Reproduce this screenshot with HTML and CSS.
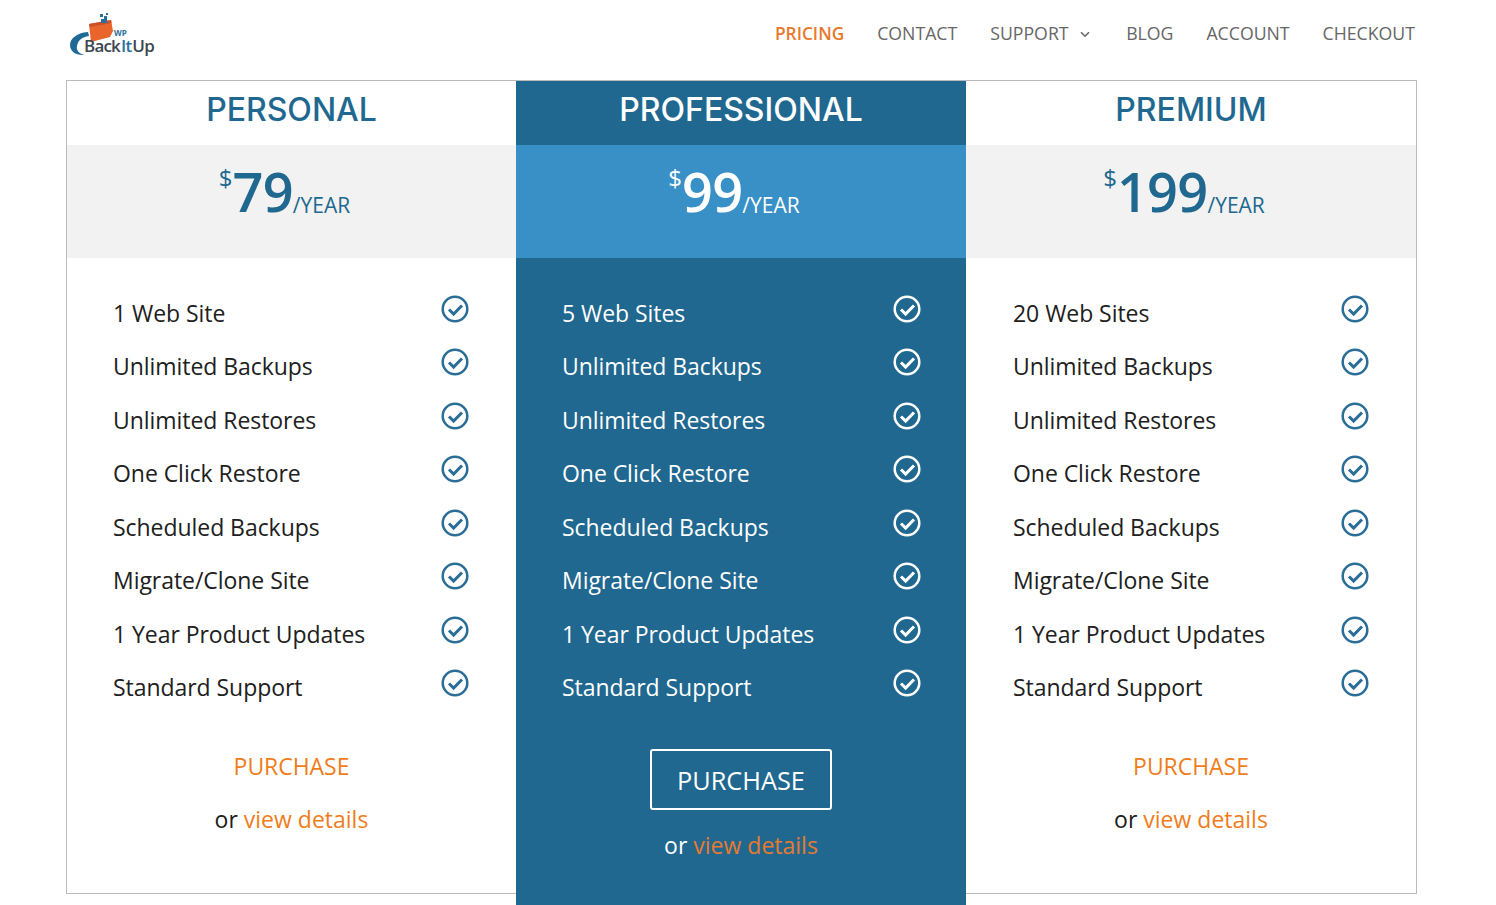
FILE: index.html
```html
<!DOCTYPE html>
<html lang="en">
<head>
<meta charset="utf-8">
<title>Pricing - WP BackItUp</title>
<link rel="stylesheet" href="styles.css">
</head>
<body>
<svg class="defs" width="0" height="0" aria-hidden="true">
  <symbol id="check" viewBox="0 0 28 28">
    <circle cx="14" cy="14" r="12.3" fill="none" stroke="currentColor" stroke-width="2.5"/>
    <path d="M8 14.5l4.6 4.6 8.4-8.6" fill="none" stroke="currentColor" stroke-width="3"/>
  </symbol>
</svg>
<header class="site-header">
  <a class="logo" href="#" aria-label="WP BackItUp">
    <svg class="logo-mark" width="90" height="46" viewBox="0 0 90 46">
      <path d="M19 20C7 21 1 27 1 33c0 6 5 10 13 10h2C10 42 7 38 8 34c1-6 5-9 12-10z" fill="#1f6a95"/>
      <path d="M20 12L42 8l2 11-3 6-19 5z" fill="#e9652c"/>
      <path d="M20 12L42 8l.6 3L21 15z" fill="#c9512a"/>
      <g fill="#2a6f9c"><rect x="31" y="2" width="3" height="3"/><rect x="35" y="4" width="3" height="3"/><rect x="32" y="7" width="6" height="4"/><rect x="37" y="1" width="2" height="2"/></g>
    </svg>
    <span class="logo-wp">WP</span>
    <span class="logo-name">Back<b>It</b>Up</span>
  </a>
  <nav class="nav">
    <a class="nav-link is-active" href="#">PRICING</a>
    <a class="nav-link" href="#">CONTACT</a>
    <a class="nav-link has-caret" href="#">SUPPORT
      <svg class="caret" width="10" height="7" viewBox="0 0 10 7"><path d="M1 1.2l4 4 4-4" fill="none" stroke="currentColor" stroke-width="1.6"/></svg>
    </a>
    <a class="nav-link" href="#">BLOG</a>
    <a class="nav-link" href="#">ACCOUNT</a>
    <a class="nav-link" href="#">CHECKOUT</a>
  </nav>
</header>
<main class="pricing">
  <section class="plan">
    <h2 class="plan-title">PERSONAL</h2>
    <div class="plan-price"><sup class="cur">$</sup><span class="amt">79</span><span class="per">/YEAR</span></div>
    <ul class="features">
      <li class="feature">1 Web Site<svg class="tick"><use href="#check"/></svg></li>
      <li class="feature">Unlimited Backups<svg class="tick"><use href="#check"/></svg></li>
      <li class="feature">Unlimited Restores<svg class="tick"><use href="#check"/></svg></li>
      <li class="feature">One Click Restore<svg class="tick"><use href="#check"/></svg></li>
      <li class="feature">Scheduled Backups<svg class="tick"><use href="#check"/></svg></li>
      <li class="feature">Migrate/Clone Site<svg class="tick"><use href="#check"/></svg></li>
      <li class="feature">1 Year Product Updates<svg class="tick"><use href="#check"/></svg></li>
      <li class="feature">Standard Support<svg class="tick"><use href="#check"/></svg></li>
    </ul>
    <a class="buy" href="#">PURCHASE</a>
    <p class="more">or <a href="#">view details</a></p>
  </section>
  <section class="plan plan-featured">
    <h2 class="plan-title">PROFESSIONAL</h2>
    <div class="plan-price"><sup class="cur">$</sup><span class="amt">99</span><span class="per">/YEAR</span></div>
    <ul class="features">
      <li class="feature">5 Web Sites<svg class="tick"><use href="#check"/></svg></li>
      <li class="feature">Unlimited Backups<svg class="tick"><use href="#check"/></svg></li>
      <li class="feature">Unlimited Restores<svg class="tick"><use href="#check"/></svg></li>
      <li class="feature">One Click Restore<svg class="tick"><use href="#check"/></svg></li>
      <li class="feature">Scheduled Backups<svg class="tick"><use href="#check"/></svg></li>
      <li class="feature">Migrate/Clone Site<svg class="tick"><use href="#check"/></svg></li>
      <li class="feature">1 Year Product Updates<svg class="tick"><use href="#check"/></svg></li>
      <li class="feature">Standard Support<svg class="tick"><use href="#check"/></svg></li>
    </ul>
    <a class="buy" href="#">PURCHASE</a>
    <p class="more">or <a href="#">view details</a></p>
  </section>
  <section class="plan plan-last">
    <h2 class="plan-title">PREMIUM</h2>
    <div class="plan-price"><sup class="cur">$</sup><span class="amt">199</span><span class="per">/YEAR</span></div>
    <ul class="features">
      <li class="feature">20 Web Sites<svg class="tick"><use href="#check"/></svg></li>
      <li class="feature">Unlimited Backups<svg class="tick"><use href="#check"/></svg></li>
      <li class="feature">Unlimited Restores<svg class="tick"><use href="#check"/></svg></li>
      <li class="feature">One Click Restore<svg class="tick"><use href="#check"/></svg></li>
      <li class="feature">Scheduled Backups<svg class="tick"><use href="#check"/></svg></li>
      <li class="feature">Migrate/Clone Site<svg class="tick"><use href="#check"/></svg></li>
      <li class="feature">1 Year Product Updates<svg class="tick"><use href="#check"/></svg></li>
      <li class="feature">Standard Support<svg class="tick"><use href="#check"/></svg></li>
    </ul>
    <a class="buy" href="#">PURCHASE</a>
    <p class="more">or <a href="#">view details</a></p>
  </section>
</main>
</body>
</html>
```
FILE: styles.css
```css
* { box-sizing: border-box; }
html, body { height: 905px; overflow: hidden; }
body {
  margin: 0;
  background: #fff;
  color: #202020;
  font-family: "Open Sans", sans-serif;
}
a { text-decoration: none; }
.defs { position: absolute; }

.site-header {
  height: 80px;
  padding: 0 81px 0 69px;
  display: flex;
  justify-content: space-between;
}
.logo {
  position: relative;
  display: block;
  width: 90px;
  height: 60px;
}
.logo-mark { position: absolute; left: 0; top: 12px; }
.logo-wp {
  position: absolute; left: 45px; top: 29px;
  font: bold 8px/8px "Open Sans", sans-serif; color: #2a6f9c;
}
.logo-name {
  position: absolute; left: 15px; top: 39px;
  font: 600 17px/14px "Open Sans", sans-serif;
  letter-spacing: -0.8px;
  color: #3c4650;
}
.logo-name b { font-weight: 600; color: #2a6f9c; margin: 0 1px; }

.nav {
  display: flex;
  gap: 33px;
  height: 66px;
  align-items: center;
}
.nav-link {
  font-size: 17.7px;
  color: #666;
  white-space: nowrap;
}
.nav-link.is-active { color: #e8792b; font-weight: 600; font-size: 17.3px; }
.caret { margin: 0 3px 0 7px; vertical-align: 2px; }

.pricing {
  position: relative;
  margin-left: 66px;
  width: 1351px;
  height: 814px;
  border: 1px solid #bbb;
  display: grid;
  grid-template-columns: 449px 450px 450px;
}
.plan { text-align: center; min-width: 0; }
.plan-title {
  margin: 0;
  height: 64px;
  font: 500 32px/58.5px Inter, "Open Sans", sans-serif;
  color: #20688f;
}
.plan-price {
  height: 113px;
  padding: 11px 14px 0 0;
  background: #f2f2f2;
  color: #20688f;
  line-height: 70px;
  white-space: nowrap;
}
.cur { font-size: 24px; line-height: 0; vertical-align: 25px; }
.amt { font-size: 54px; font-weight: 600; letter-spacing: -0.7px; }
.per { font-size: 21px; vertical-align: -1px; }

.features {
  list-style: none;
  margin: 0;
  padding: 28.5px 47px 0 46px;
}
.feature {
  height: 53.5px;
  line-height: 53.5px;
  font-size: 23px;
  letter-spacing: -0.05px;
  text-align: left;
  display: flex;
  justify-content: space-between;
  white-space: nowrap;
}
.tick {
  width: 28px;
  height: 28px;
  margin-top: 8px;
  color: #2a6d96;
}

.buy {
  display: block;
  margin-top: 31px;
  line-height: 40px;
  font-size: 23px;
  letter-spacing: -0.05px;
  color: #ef7d1a;
}
.more {
  margin: 13px 0 0;
  line-height: 40px;
  font-size: 23px;
}
.more a { color: #ef7d1a; }

.plan-last .features { padding-left: 47px; }

.plan-featured {
  height: 840px;
  background: #20688f;
  color: #fff;
}
.plan-featured .plan-title { color: #fff; }
.plan-featured .plan-price { background: #3890c6; color: #fff; }
.plan-featured .tick { color: #fff; }
.plan-featured .features { padding-left: 46px; padding-right: 45.5px; }
.plan-featured .buy {
  width: 182px;
  height: 61px;
  margin: 34px auto 0;
  line-height: 58px;
  font-size: 25.3px;
  letter-spacing: 0;
  border: 2px solid #fff;
  border-radius: 3px;
  color: #fff;
}
.plan-featured .more { margin-top: 15px; }
.plan-featured .more a { color: #e77a2e; }
```
